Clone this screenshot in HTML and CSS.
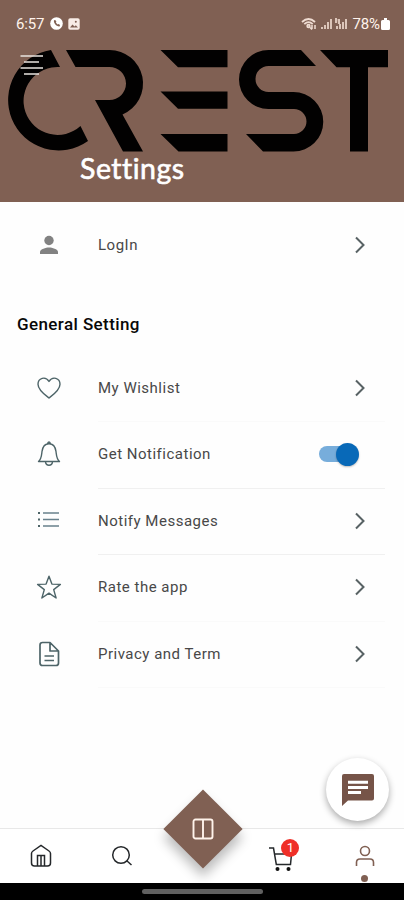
FILE: index.html
```html
<!DOCTYPE html>
<html lang="en">
<head>
<meta charset="utf-8">
<title>Settings</title>
<link rel="stylesheet" href="styles.css">
</head>
<body>
<div class="screen">
  <header class="header">
    <div class="status">
      <span class="clock">6:57</span>
      <svg class="st-call" width="13" height="13" viewBox="0 0 13 13"><circle cx="6.5" cy="6.5" r="6.3" fill="#fff"/><path d="M4 3.2c-.8 2.6 2.600 6.500 5.500 6.200l.6-1.300-1.700-1.200-.9.600-1.700-1.900.6-.9L5.300 2.900z" fill="#806053"/></svg>
      <svg class="st-pic" width="12" height="12" viewBox="0 0 12 12"><rect x=".3" y=".3" width="11.400" height="11.400" rx="1.800" fill="#f8ece6"/><path d="M2 9.500l2.500-3 2 2 1.300-1.300L10 9.500z" fill="#806053"/><circle cx="7.800" cy="3.800" r="1" fill="#806053"/></svg>
      <svg class="st-signal" width="48" height="14" viewBox="0 0 48 14"><g fill="none" stroke="#efdcd2" stroke-width="1.800"><path d="M1 5Q7.500-1 14 5M3.300 7.200Q7.500 3 11.700 7.200"/><circle cx="7.500" cy="9" r="1.300"/></g><path d="M11 8v4m-2-1.500l2 2m3-4.500v4" stroke="#efdcd2" stroke-width="1.500"/><path d="M20 10h2v2h-2zM23 8h2v4h-2zM26 5h2v7h-2zM29 2h2v10h-2zM35 9h2v3h-2zM38 7h2v5h-2zM41 5h2v7h-2zM44 2h2v10h-2zM34 1h2v5H34zM36.500 2H39v5h-2z" fill="#dcc5b9"/></svg>
      <span class="percent">78%</span>
      <svg width="9" height="12" viewBox="0 0 9 12"><path d="M3 0h3v2h1.500Q9 2 9 3.500v7Q9 12 7.500 12h-6Q0 12 0 10.500v-7Q0 2 1.500 2H3z" fill="#fff"/></svg>
    </div>
    <svg class="logo" width="404" height="110" viewBox="0 46 404 110" role="img" aria-label="Crest">
      <path d="M51 50A50.500 50.500 0 1 0 88 141L80.500 126A34 34 0 1 1 60 67Z"/>
      <path d="M66 50H109.500A33.500 33.500 0 0 1 122.500 114.400L143 151.500H123L95 100H109.500A16.500 16.500 0 0 0 109.500 67H75.500Z"/>
      <path d="M160.500 50H227.500V67.200H178ZM160.500 91.500H227.500V108.700H178ZM160.500 134H227.500V151.500H178.500Z"/>
      <path d="M301 50L316 66H268.500A13 13 0 0 0 268.500 92H293.500A29.700 29.700 0 0 1 293.500 151.500H263L246 134H294A12.500 12.500 0 0 0 294 109H268.500A29.500 29.500 0 0 1 268.500 50Z"/>
      <path d="M320 50H388V67.200H368V151.500H350V67.200H336.500Z"/>
    </svg>
    <svg class="menu" width="24" height="22" viewBox="0 0 24 22"><path d="M.5 2H23M4 8H19M.5 14H23M4 20H19" stroke="#e9e4e0" stroke-width="1.600"/></svg>
    <h1 class="title">Settings</h1>
  </header>

  <main class="main">
    <div class="row login">
      <svg class="icon" width="26" height="26" viewBox="0 0 26 26"><circle cx="13" cy="8.500" r="4.700" fill="#828282"/><path d="M4 22v-2c0-3 6-4.500 9-4.500s9 1.500 9 4.500v2z" fill="#828282"/></svg>
      <span class="label l-login">LogIn</span>
      <svg class="chev" width="12" height="18" viewBox="0 0 12 18"><path d="M2 1.500L9.500 9 2 16.500"/></svg>
    </div>
    <h2 class="section">General Setting</h2>
    <div class="row">
      <svg class="icon line" width="26" height="26" viewBox="0 0 26 26"><path d="M13 23C9 20 2 15 2 9.200 2 3 9.500.7 13 6.500 16.500.7 24 3 24 9.200 24 15 17 20 13 23Z"/></svg>
      <span class="label l-wish">My Wishlist</span>
      <svg class="chev" width="12" height="18" viewBox="0 0 12 18"><path d="M2 1.500L9.500 9 2 16.500"/></svg>
    </div>
    <div class="row faint">
      <svg class="icon line" width="26" height="26" viewBox="0 0 26 26"><path d="M11.500 2.500q1.500-3 3 0M2.500 20.500c3-2.500 3-6 3.500-10C6.700 5.500 9.500 2.800 13 2.800s6.300 2.700 7 7.700c.5 4 .5 7.500 3.500 10zM9.500 20.800c.5 4.500 6.500 4.500 7 0"/></svg>
      <span class="label l-get">Get Notification</span>
      <span class="switch"><span class="knob"></span></span>
    </div>
    <div class="row ruled">
      <svg class="icon line" width="26" height="26" viewBox="0 0 26 26"><path d="M7 5H23M7 11.500H23M7 18H23" stroke="#68818c"/><path d="M2 5h2M2 11.500h2M2 18h2" stroke-width="2"/></svg>
      <span class="label l-msg">Notify Messages</span>
      <svg class="chev" width="12" height="18" viewBox="0 0 12 18"><path d="M2 1.500L9.500 9 2 16.500"/></svg>
    </div>
    <div class="row ruled">
      <svg class="icon line" width="26" height="26" viewBox="0 0 26 26"><path d="M13 2.200l2.900 7.900 8.500.3-6.700 5.200 2.400 8.400-7.100-4.800L5.900 24l2.400-8.400-6.700-5.200 8.500-.3z"/></svg>
      <span class="label l-rate">Rate the app</span>
      <svg class="chev" width="12" height="18" viewBox="0 0 12 18"><path d="M2 1.500L9.500 9 2 16.500"/></svg>
    </div>
    <div class="row faint">
      <svg class="icon line doc" width="26" height="26" viewBox="0 0 26 26"><path d="M6.500 1.500H14l8.500 8.500v12q0 2.500-2.500 2.500H6.500Q4 24.500 4 22V4q0-2.500 2.500-2.500zM14 1.500V10h8.500M8.500 15H18M8.500 19.500H18"/></svg>
      <span class="label l-priv">Privacy and Term</span>
      <svg class="chev" width="12" height="18" viewBox="0 0 12 18"><path d="M2 1.500L9.500 9 2 16.500"/></svg>
    </div>
    <div class="end"></div>
  </main>

  <nav class="nav">
    <div class="tab"><svg width="22" height="24" viewBox="0 0 22 24" fill="none" stroke="#25282b" stroke-width="1.500"><path d="M1.500 9.500Q1.500 8 3 7L11 1.500 19 7q1.500 1 1.500 2.500V19q0 3-3 3h-13q-3 0-3-3zM7.500 22V11.500h7V22M11 12V22"/></svg></div>
    <div class="tab"><svg width="22" height="22" viewBox="0 0 22 22" fill="none" stroke="#25282b" stroke-width="1.500"><circle cx="10" cy="10" r="8.300"/><path d="M15.800 15.800L20.500 20"/></svg></div>
    <div class="tab"></div>
    <div class="tab cart"><svg width="26" height="26" viewBox="0 0 26 26"><path d="M1 2h4.500L8.300 18.500H22.500L23.500 8M6.500 8H22" fill="none" stroke="#25282b" stroke-width="1.500"/><circle cx="9.500" cy="23" r="2" fill="#111"/><circle cx="20.500" cy="23" r="2" fill="#111"/></svg><span class="badge">1</span></div>
    <div class="tab user"><svg width="20" height="22" viewBox="0 0 20 22" fill="none" stroke="#806053" stroke-width="1.600"><circle cx="10" cy="6" r="4.500"/><path d="M1.500 21v-3.500q0-3.500 3.500-3.500h10q3.500 0 3.500 3.500V21"/></svg><span class="dot"></span></div>
  </nav>
  <div class="gesture"><span class="pill"></span></div>
  <div class="diamond"></div>
  <svg class="book" width="22" height="22" viewBox="0 0 22 22" fill="none" stroke="#fff3eb" stroke-width="1.900"><rect x="1.500" y="1.500" width="19" height="19" rx="2"/><path d="M11 1.500v19"/></svg>
  <div class="chat"><svg width="34" height="34" viewBox="0 0 34 34"><path d="M3 1H31q2 0 2 2V25.500q0 2-2 2H7L1 33V3q0-2 2-2z" fill="#765448"/><path d="M7 9.300H27M7 14.500H27M7 19.500H20" stroke="#fff" stroke-width="3"/></svg></div>
</div>
</body>
</html>
```

FILE: styles.css
```css
* { box-sizing: border-box; }
body { margin: 0; font-family: Roboto, sans-serif; background: #fff; }
.screen { position: relative; width: 404px; height: 900px; overflow: hidden; display: flex; flex-direction: column; background: #fefefe; }
.header { position: relative; height: 202px; flex: none; background: #806053; }
.status { display: flex; align-items: center; height: 46px; padding: 1px 14px 0 16px; color: #fff3ec; font-size: 15px; }
.clock { width: 28px; white-space: nowrap; letter-spacing: -.2px; }
.st-call { margin-left: 6px; }
.st-pic { margin-left: 5px; }
.st-signal { margin-left: auto; }
.percent { margin: 0 1px 0 3px; letter-spacing: -.1px; }
.logo { display: block; fill: #020101; }
.menu { position: absolute; left: 20px; top: 54px; }
.title { position: absolute; left: 80px; top: 150px; margin: 0; font: 400 28.500px/36px Lato, sans-serif; color: #fff; -webkit-text-stroke: .6px #fff; letter-spacing: .5px; }
.main { flex: 1; padding-top: 10px; }
.row { position: relative; display: flex; align-items: center; height: 66.500px; padding: 0 38px 0 35.500px; }
.row.ruled::before, .row.faint::before, .end::before { content: ""; display: block; position: absolute; left: 98px; right: 19px; top: 0; height: 1px; background: #fafafa; }
.row.ruled::before { background: #f0f0f0; }
.end { position: relative; height: 1px; }
.icon { flex: none; margin-right: 36.500px; }
.line { fill: none; stroke: #4d6468; stroke-width: 1.400; stroke-linejoin: round; }
.doc { stroke-width: 1.700; }
.label { flex: 1; font-size: 15px; line-height: 20px; color: #484848; letter-spacing: .5px; white-space: nowrap; }
.chev { fill: none; stroke: #586264; stroke-width: 2; }
.section { margin: 34px 0 20px 17px; font-size: 17px; line-height: 22px; font-weight: 500; color: #080808; letter-spacing: .4px; }
.switch { display: flex; align-items: center; justify-content: flex-end; width: 38px; height: 16px; margin-right: 9px; border-radius: 8px; background: #77addb; }
.knob { flex: none; width: 23px; height: 23px; margin-right: -2px; border-radius: 50%; background: #0869b8; box-shadow: 0 1px 2px #0004; }
.nav { display: grid; grid-template-columns: repeat(5, 1fr); height: 55px; flex: none; border-top: 1px solid #e8e8e8; background: #fff; }
.tab { position: relative; display: flex; align-items: center; justify-content: center; padding-left: 2px; }
.cart svg { margin-top: 5px; margin-right: 6px; }
.badge { position: absolute; left: 39px; top: 10px; width: 18px; height: 18px; border-radius: 50%; background: #ef2f28; color: #fff; font-size: 13px; line-height: 18px; text-align: center; }
.dot { position: absolute; left: 38px; bottom: 1px; width: 7px; height: 7px; border-radius: 50%; background: #806053; }
.gesture { display: flex; justify-content: center; align-items: center; height: 17px; flex: none; background: #000; }
.pill { width: 121px; height: 5px; border-radius: 3px; background: #606060; }
.diamond { position: absolute; left: 175px; top: 801px; width: 56px; height: 56px; transform: rotate(45deg); background: #806053; box-shadow: 6px 6px 12px #0004; }
.book { position: absolute; left: 192px; top: 818px; }
.chat { position: absolute; left: 326px; top: 758px; width: 63px; height: 63px; border-radius: 50%; background: #fff; display: flex; align-items: center; justify-content: center; box-shadow: 0 3px 7px #0005; }
```
